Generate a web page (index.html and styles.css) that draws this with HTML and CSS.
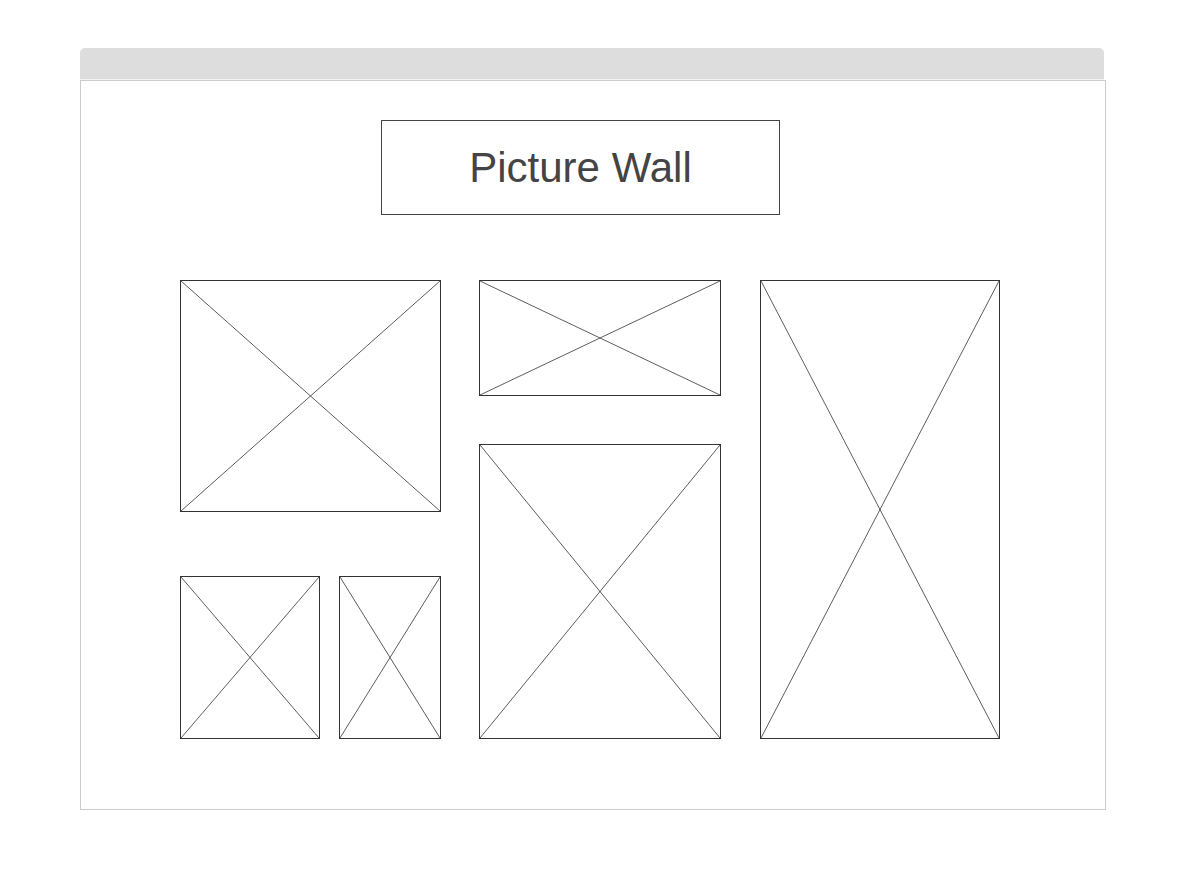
FILE: index.html
```html
<!DOCTYPE html>
<html>
<head>
<meta charset="utf-8">
<link rel="stylesheet" href="styles.css">
</head>
<body>
<div class="window">
  <div class="titlebar"></div>
  <div class="frame">
    <div class="heading"><span>Picture Wall</span></div>
    <div class="wall">
      <div class="col col-a">
        <svg class="pic p1" viewBox="0 0 100 100" preserveAspectRatio="none"><line x1="0" y1="0" x2="100" y2="100" vector-effect="non-scaling-stroke"/><line x1="100" y1="0" x2="0" y2="100" vector-effect="non-scaling-stroke"/></svg>
        <div class="pair">
          <svg class="pic p5" viewBox="0 0 100 100" preserveAspectRatio="none"><line x1="0" y1="0" x2="100" y2="100" vector-effect="non-scaling-stroke"/><line x1="100" y1="0" x2="0" y2="100" vector-effect="non-scaling-stroke"/></svg>
          <svg class="pic p6" viewBox="0 0 100 100" preserveAspectRatio="none"><line x1="0" y1="0" x2="100" y2="100" vector-effect="non-scaling-stroke"/><line x1="100" y1="0" x2="0" y2="100" vector-effect="non-scaling-stroke"/></svg>
        </div>
      </div>
      <div class="col col-b">
        <svg class="pic p2" viewBox="0 0 100 100" preserveAspectRatio="none"><line x1="0" y1="0" x2="100" y2="100" vector-effect="non-scaling-stroke"/><line x1="100" y1="0" x2="0" y2="100" vector-effect="non-scaling-stroke"/></svg>
        <svg class="pic p4" viewBox="0 0 100 100" preserveAspectRatio="none"><line x1="0" y1="0" x2="100" y2="100" vector-effect="non-scaling-stroke"/><line x1="100" y1="0" x2="0" y2="100" vector-effect="non-scaling-stroke"/></svg>
      </div>
      <div class="col col-c">
        <svg class="pic p3" viewBox="0 0 100 100" preserveAspectRatio="none"><line x1="0" y1="0" x2="100" y2="100" vector-effect="non-scaling-stroke"/><line x1="100" y1="0" x2="0" y2="100" vector-effect="non-scaling-stroke"/></svg>
      </div>
    </div>
  </div>
</div>
</body>
</html>
```
FILE: styles.css
```css
html, body {
  margin: 0;
  padding: 0;
  background: #ffffff;
}
body {
  font-family: "Liberation Sans", Arial, sans-serif;
}
.window {
  padding: 48px 0 0 80px;
  width: 1026px;
}
.titlebar {
  width: 1024px;
  height: 31px;
  background: #dddddd;
  border-radius: 5px 5px 0 0;
  border-bottom: 1px solid #f2f2f2;
}
.frame {
  box-sizing: border-box;
  width: 1026px;
  height: 730px;
  border: 1px solid #cccccc;
  padding: 39px 0 0 99px;
  display: flex;
  flex-direction: column;
  align-items: flex-start;
}
.heading {
  box-sizing: border-box;
  margin-left: 201px;
  width: 399px;
  height: 95px;
  border: 1px solid #444444;
  display: flex;
  align-items: center;
  justify-content: center;
  font-size: 42px;
  color: #444444;
  line-height: 1;
  padding-left: 0;
}
.wall {
  margin-top: 65px;
  display: flex;
  align-items: flex-start;
}
.col {
  display: flex;
  flex-direction: column;
}
.col-a {
  width: 261px;
  gap: 64px;
  margin-right: 38px;
}
.col-b {
  width: 242px;
  gap: 48px;
  margin-right: 39px;
}
.col-c {
  width: 240px;
}
.pair {
  display: flex;
  gap: 19px;
}
.pic {
  display: block;
  box-sizing: border-box;
  border: 1px solid #333333;
  stroke: #333333;
  stroke-width: 0.8;
  fill: none;
}
.p1 { width: 261px; height: 232px; }
.p2 { width: 242px; height: 116px; }
.p3 { width: 240px; height: 459px; }
.p4 { width: 242px; height: 295px; }
.p5 { width: 140px; height: 163px; }
.p6 { width: 102px; height: 163px; }
```
